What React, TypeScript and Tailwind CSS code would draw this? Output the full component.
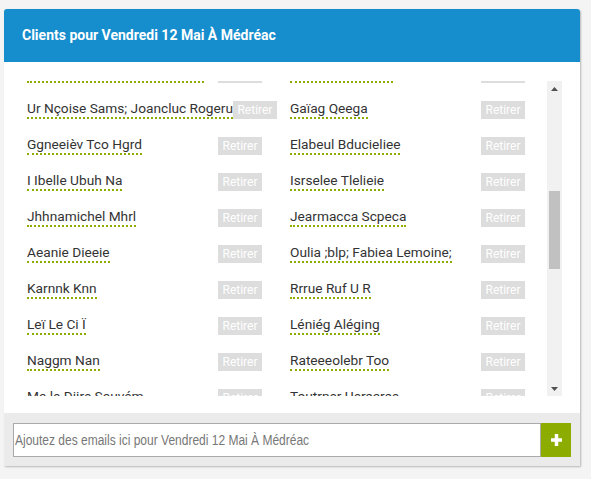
import React from "react";

const rows: [string, string][] = [
  ["Mahrie-Clhure Dbonnaie Eefa", "Jaeqmes Prelote"],
  ["Ur Nçoise Sams; Joancluc Rogeru", "Gaïag Qeega"],
  ["Ggneeièv Tco Hgrd", "Elabeul Bducieliee"],
  ["I Ibelle Ubuh Na", "Isrselee Tlelieie"],
  ["Jhhnamichel Mhrl", "Jearmacca Scpeca"],
  ["Aeanie Dieeie", "Oulia ;blp; Fabiea Lemoine;"],
  ["Karnnk Knn", "Rrrue Ruf U R"],
  ["Leï Le Ci Ï", "Léniég Aléging"],
  ["Naggm Nan", "Rateeeolebr Too"],
  ["Ma le Diire Sauvém", "Toutrner Uersarse"],
];

function Cell({ name }: { name: string }) {
  return (
    <div className="h-[36px] flex items-end justify-between">
      <span className="shrink-0 whitespace-nowrap text-[13.7px] leading-[18px] text-[#333] border-b-2 border-dotted border-[#8cad00]">
        {name}
      </span>
      <button className="shrink-0 w-[44px] h-[18px] bg-[#dddddd] text-white text-[12px] leading-[18px] text-center">
        Retirer
      </button>
    </div>
  );
}

export default function App() {
  return (
    <div className="min-h-[479px] bg-[#f4f4f4] pt-[9px] pl-[4px] font-['Roboto',sans-serif]">
      <div className="w-[576px] rounded-t-[3px] shadow-[1px_1px_2px_rgba(0,0,0,0.25)]">
        <div className="h-[53px] bg-[#168dcd] rounded-t-[3px] flex items-center pl-[18px]">
          <h2 className="text-white font-bold text-[14px]">Clients pour Vendredi 12 Mai À Médréac</h2>
        </div>
        <div className="bg-white pl-[23px] pr-[18px] pt-[19px] pb-[17px]">
          <div className="flex h-[315px]">
            <div className="w-[520px] overflow-hidden">
              <div className="-mt-[34px] grid grid-cols-[235px_235px] gap-x-[28px]">
                {rows.map(([a, b], i) => (
                  <React.Fragment key={i}>
                    <Cell name={a} />
                    <Cell name={b} />
                  </React.Fragment>
                ))}
              </div>
            </div>
            <div className="w-[15px] bg-[#f1f1f1] flex flex-col items-center">
              <div className="h-[15px] flex items-center justify-center">
                <svg width="7" height="4" viewBox="0 0 7 4"><path d="M3.5 0 L7 4 L0 4 Z" fill="#505050" /></svg>
              </div>
              <div className="h-[95px]" />
              <div className="w-[11px] h-[78px] bg-[#c1c1c1]" />
              <div className="flex-1" />
              <div className="h-[15px] flex items-center justify-center">
                <svg width="7" height="4" viewBox="0 0 7 4"><path d="M0 0 L7 0 L3.5 4 Z" fill="#505050" /></svg>
              </div>
            </div>
          </div>
        </div>
        <div className="bg-[#ebebeb] pt-[10px] pb-[9px] px-[9px] flex">
          <div className="relative flex-1 h-[34px] border border-[#aaaaaa] bg-white">
            <input
              aria-label="Ajoutez des emails"
              className="absolute inset-0 w-full h-full bg-transparent outline-none px-[1px] text-[14px] font-['Liberation_Sans',Arial,sans-serif]"
            />
            <span className="pointer-events-none absolute left-[1px] top-0 h-full flex items-center whitespace-nowrap text-[14px] text-[#777] font-['Liberation_Sans',Arial,sans-serif] origin-left scale-x-[0.857]">
              Ajoutez des emails ici pour Vendredi 12 Mai À Médréac
            </span>
          </div>
          <button className="w-[30px] h-[34px] bg-[#8cad00] flex items-center justify-center">
            <svg width="11" height="12" viewBox="0 0 11 12">
              <rect x="0" y="4.25" width="11" height="3.5" fill="#fff" />
              <rect x="3.75" y="0" width="3.5" height="12" fill="#fff" />
            </svg>
          </button>
        </div>
      </div>
    </div>
  );
}
